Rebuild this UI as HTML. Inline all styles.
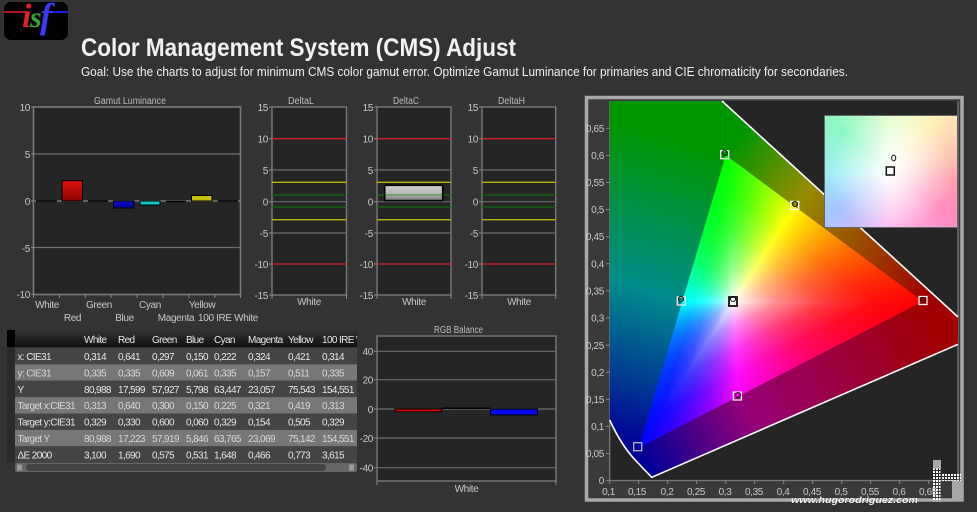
<!DOCTYPE html>
<html><head><meta charset="utf-8"><style>
html,body{margin:0;padding:0;background:#333;width:977px;height:512px;overflow:hidden}
.l{position:absolute;left:0;top:0}
svg text{font-family:"Liberation Sans",sans-serif}
.t{font-size:10px;fill:#c9c9c9;letter-spacing:-.35px}
.tb{font-size:10px;fill:#e8e8e8;letter-spacing:-.62px}
.ti{font-size:10px;fill:#bdbdbd}
</style></head><body>
<svg class="l" width="977" height="512" viewBox="0 0 977 512">
<defs>
<linearGradient id="gL" gradientUnits="userSpaceOnUse" x1="725.7" y1="155" x2="638.7" y2="447.8"><stop offset="0" stop-color="#009600"/><stop offset=".5" stop-color="#008c8c"/><stop offset="1" stop-color="#000096"/></linearGradient>
<linearGradient id="gU" gradientUnits="userSpaceOnUse" x1="725.7" y1="155" x2="922.9" y2="301.4"><stop offset="0" stop-color="#009600"/><stop offset=".35" stop-color="#968c00"/><stop offset="1" stop-color="#a00000"/></linearGradient>
<linearGradient id="gB" gradientUnits="userSpaceOnUse" x1="922.9" y1="301.4" x2="638.7" y2="447.8"><stop offset="0" stop-color="#a00000"/><stop offset=".65" stop-color="#960078"/><stop offset="1" stop-color="#000096"/></linearGradient>
<clipPath id="outer"><path d="M609.7,101 L722,101 L958,317 L958,344.3 L651.7,477.3 L638,463 Q622,447 609.7,420 Z"/></clipPath>
<clipPath id="tc"><rect x="7" y="330" width="350" height="20"/></clipPath>
<linearGradient id="red" x1="0" y1="0" x2="0" y2="1"><stop offset="0" stop-color="#e01212"/><stop offset="1" stop-color="#8a0000"/></linearGradient>
<linearGradient id="blu" x1="0" y1="0" x2="0" y2="1"><stop offset="0" stop-color="#1010c8"/><stop offset="1" stop-color="#000090"/></linearGradient>
<linearGradient id="sil" x1="0" y1="0" x2="0" y2="1"><stop offset="0" stop-color="#d0d0d0"/><stop offset=".6" stop-color="#b4b4b4"/><stop offset="1" stop-color="#777"/></linearGradient>
<linearGradient id="hd" x1="0" y1="0" x2="0" y2="1"><stop offset="0" stop-color="#333"/><stop offset="1" stop-color="#111"/></linearGradient>
</defs>
<rect width="977" height="512" fill="#333"/>

<!-- logo -->
<rect x="4" y="2" width="64" height="38" rx="7" fill="#000"/>
<rect x="3" y="11" width="24" height="2" fill="#b01020"/>
<rect x="52" y="11" width="16" height="2" fill="#1a1ae0"/>
<text x="22" y="27" style="font-family:'Liberation Serif',serif;font-style:italic;font-weight:bold;font-size:34px;fill:#e0202a">i</text>
<text x="30" y="27" style="font-family:'Liberation Serif',serif;font-style:italic;font-weight:bold;font-size:30px;fill:#2ea82e">s</text>
<text x="40" y="28" style="font-family:'Liberation Serif',serif;font-style:italic;font-weight:bold;font-size:36px;fill:#3a3aff">f</text>

<text x="81" y="56" textLength="435" lengthAdjust="spacingAndGlyphs" style="font-size:25px;font-weight:bold;fill:#f2f2f2">Color Management System (CMS) Adjust</text>
<text x="81" y="76" textLength="767" lengthAdjust="spacingAndGlyphs" style="font-size:13px;fill:#f0f0f0">Goal: Use the charts to adjust for minimum CMS color gamut error. Optimize Gamut Luminance for primaries and CIE chromaticity for secondaries.</text>

<!-- Gamut luminance -->
<text class="ti" x="94" y="104" textLength="72" lengthAdjust="spacingAndGlyphs">Gamut Luminance</text>
<rect x="33.5" y="107" width="207" height="187.5" fill="#252525" stroke="#7a7a7a" stroke-width="1.6"/>
<g stroke="#6e6e6e" stroke-width="1.2"><path d="M33.5 154H240.5M33.5 247.5H240.5"/></g>
<path d="M33.5 201H240.5" stroke="#777" stroke-width="1.4"/>
<path d="M36 201H57M88 201H108M166 201.5H186M218 201H238" stroke="#000" stroke-width="1.4"/>
<g stroke="#000" stroke-width="1">
<rect x="62" y="180.7" width="20.5" height="20.3" fill="url(#red)"/>
<rect x="113.5" y="201" width="20.5" height="7" fill="url(#blu)"/>
<rect x="140" y="201" width="20" height="4" fill="#12c8c8"/>
<rect x="191.5" y="195.5" width="20.5" height="5.5" fill="#c8c010"/>
</g>
<g stroke="#888" stroke-width="1"><path d="M31 107h3M31 154h3M31 201h3M31 247.500h3M31 294h3M59.400 294v4M85.300 294v4M111.200 294v4M137.100 294v4M163 294v4M188.900 294v4M214.800 294v4M240.500 294v4M33.500 294v4"/></g>
<g text-anchor="end"><text class="t" x="30" y="111">10</text><text class="t" x="30" y="158">5</text><text class="t" x="30" y="205">0</text><text class="t" x="30" y="252">-5</text><text class="t" x="30" y="298">-10</text></g>
<g text-anchor="middle">
<text class="t" x="47" y="308">White</text><text class="t" x="99" y="308">Green</text><text class="t" x="150" y="308">Cyan</text><text class="t" x="202" y="308">Yellow</text>
<text class="t" x="72.500" y="321">Red</text><text class="t" x="124.500" y="321">Blue</text><text class="t" x="176" y="321">Magenta</text><text class="t" x="228" y="321">100 IRE White</text>
</g>

<!-- Delta charts -->
<g id="dL">
<rect x="272" y="107" width="74.500" height="188" fill="#252525" stroke="#7a7a7a" stroke-width="1.4"/>
<path d="M272 170H346.500M272 201.700H346.500M272 233H346.500" stroke="#6e6e6e" stroke-width="1.2"/>
<path d="M272 138.700H346.500M272 264H346.500" stroke="#d8202a" stroke-width="1.3"/>
<path d="M272 182.300H346.500M272 219.700H346.500" stroke="#b8b800" stroke-width="1.3"/>
<path d="M272 195H346.500M272 207H346.500" stroke="#126012" stroke-width="1.6"/>
<path d="M269 107h3M269 138.700h3M269 170h3M269 201.700h3M269 233h3M269 264h3M269 295h3M272 295v4M346.500 295v4" stroke="#888"/>
<g text-anchor="end"><text class="t" x="268" y="111">15</text><text class="t" x="268" y="142.500">10</text><text class="t" x="268" y="174">5</text><text class="t" x="268" y="205.500">0</text><text class="t" x="268" y="237">-5</text><text class="t" x="268" y="268">-10</text><text class="t" x="268" y="299">-15</text></g>
<text class="ti" x="288" y="104" textLength="26" lengthAdjust="spacingAndGlyphs">DeltaL</text>
<text class="t" x="309" y="305" text-anchor="middle">White</text>
</g>
<g>
<rect x="377" y="107" width="74" height="188" fill="#252525" stroke="#7a7a7a" stroke-width="1.4"/>
<path d="M377 170H451M377 201.700H451M377 233H451" stroke="#6e6e6e" stroke-width="1.2"/>
<path d="M377 138.700H451M377 264H451" stroke="#d8202a" stroke-width="1.3"/>
<rect x="384.700" y="185.300" width="58" height="15.300" fill="url(#sil)" stroke="#000" stroke-width="1.6"/>
<path d="M377 182.300H451M377 219.700H451" stroke="#b8b800" stroke-width="1.3"/>
<path d="M377 195H384M443.500 195H451M377 207H451" stroke="#126012" stroke-width="1.6"/>
<path d="M385.500 195H442" stroke="#5e9e5e" stroke-width="1.6"/>
<path d="M374 107h3M374 138.700h3M374 170h3M374 201.700h3M374 233h3M374 264h3M374 295h3M377 295v4M451 295v4" stroke="#888"/>
<g text-anchor="end"><text class="t" x="373" y="111">15</text><text class="t" x="373" y="142.500">10</text><text class="t" x="373" y="174">5</text><text class="t" x="373" y="205.500">0</text><text class="t" x="373" y="237">-5</text><text class="t" x="373" y="268">-10</text><text class="t" x="373" y="299">-15</text></g>
<text class="ti" x="393" y="104" textLength="26" lengthAdjust="spacingAndGlyphs">DeltaC</text>
<text class="t" x="414" y="305" text-anchor="middle">White</text>
</g>
<g>
<rect x="482" y="107" width="73.700" height="188" fill="#252525" stroke="#7a7a7a" stroke-width="1.4"/>
<path d="M482 170H555.700M482 201.700H555.700M482 233H555.700" stroke="#6e6e6e" stroke-width="1.2"/>
<path d="M482 138.700H555.700M482 264H555.700" stroke="#d8202a" stroke-width="1.3"/>
<path d="M482 182.300H555.700M482 219.700H555.700" stroke="#b8b800" stroke-width="1.3"/>
<path d="M482 195H555.700M482 207H555.700" stroke="#126012" stroke-width="1.6"/>
<path d="M479 107h3M479 138.700h3M479 170h3M479 201.700h3M479 233h3M479 264h3M479 295h3M482 295v4M555.700 295v4" stroke="#888"/>
<g text-anchor="end"><text class="t" x="478" y="111">15</text><text class="t" x="478" y="142.500">10</text><text class="t" x="478" y="174">5</text><text class="t" x="478" y="205.500">0</text><text class="t" x="478" y="237">-5</text><text class="t" x="478" y="268">-10</text><text class="t" x="478" y="299">-15</text></g>
<text class="ti" x="498" y="104" textLength="27" lengthAdjust="spacingAndGlyphs">DeltaH</text>
<text class="t" x="519" y="305" text-anchor="middle">White</text>
</g>

<!-- Table -->
<rect x="7" y="330" width="8" height="133" fill="#2a2a2a"/>
<rect x="7" y="330" width="8" height="17" fill="#000"/>
<rect x="15" y="330" width="342" height="17" fill="url(#hd)"/>
<rect x="15" y="348" width="342" height="16.300" fill="#444"/>
<rect x="15" y="364.300" width="342" height="16.400" fill="#777"/>
<rect x="15" y="380.700" width="342" height="16.400" fill="#444"/>
<rect x="15" y="397.100" width="342" height="16.400" fill="#777"/>
<rect x="15" y="413.500" width="342" height="16.400" fill="#444"/>
<rect x="15" y="429.900" width="342" height="16.400" fill="#777"/>
<rect x="15" y="446.300" width="342" height="16.700" fill="#444"/>
<rect x="15" y="463" width="342" height="9" rx="2" fill="#666"/>
<rect x="26" y="464" width="300" height="7" rx="3" fill="#444"/>
<rect x="17" y="464.500" width="5" height="6" fill="#999"/>
<rect x="349" y="464.500" width="5" height="6" fill="#999"/>
<g clip-path="url(#tc)"><text class="tb" y="343"><tspan x="84">White</tspan><tspan x="118">Red</tspan><tspan x="152">Green</tspan><tspan x="186">Blue</tspan><tspan x="214">Cyan</tspan><tspan x="248">Magenta</tspan><tspan x="288">Yellow</tspan><tspan x="322">100 IRE White</tspan></text></g>
<g>
<text class="tb" y="360"><tspan x="17.500">x: CIE31</tspan><tspan x="84">0,314</tspan><tspan x="118">0,641</tspan><tspan x="152">0,297</tspan><tspan x="186">0,150</tspan><tspan x="214">0,222</tspan><tspan x="248">0,324</tspan><tspan x="288">0,421</tspan><tspan x="322">0,314</tspan></text>
<text class="tb" y="376.400" style="fill:#d8d8d8"><tspan x="17.500">y: CIE31</tspan><tspan x="84">0,335</tspan><tspan x="118">0,335</tspan><tspan x="152">0,609</tspan><tspan x="186">0,061</tspan><tspan x="214">0,335</tspan><tspan x="248">0,157</tspan><tspan x="288">0,511</tspan><tspan x="322">0,335</tspan></text>
<text class="tb" y="392.800"><tspan x="17.500">Y</tspan><tspan x="84">80,988</tspan><tspan x="118">17,599</tspan><tspan x="152">57,927</tspan><tspan x="186">5,798</tspan><tspan x="214">63,447</tspan><tspan x="248">23,057</tspan><tspan x="288">75,543</tspan><tspan x="322">154,551</tspan></text>
<text class="tb" y="409.200" style="fill:#d8d8d8"><tspan x="17.500">Target x:CIE31</tspan><tspan x="84">0,313</tspan><tspan x="118">0,640</tspan><tspan x="152">0,300</tspan><tspan x="186">0,150</tspan><tspan x="214">0,225</tspan><tspan x="248">0,321</tspan><tspan x="288">0,419</tspan><tspan x="322">0,313</tspan></text>
<text class="tb" y="425.600"><tspan x="17.500">Target y:CIE31</tspan><tspan x="84">0,329</tspan><tspan x="118">0,330</tspan><tspan x="152">0,600</tspan><tspan x="186">0,060</tspan><tspan x="214">0,329</tspan><tspan x="248">0,154</tspan><tspan x="288">0,505</tspan><tspan x="322">0,329</tspan></text>
<text class="tb" y="442" style="fill:#d8d8d8"><tspan x="17.500">Target Y</tspan><tspan x="84">80,988</tspan><tspan x="118">17,223</tspan><tspan x="152">57,919</tspan><tspan x="186">5,846</tspan><tspan x="214">63,765</tspan><tspan x="248">23,069</tspan><tspan x="288">75,142</tspan><tspan x="322">154,551</tspan></text>
<text class="tb" y="458.400"><tspan x="17.500">ΔE 2000</tspan><tspan x="84">3,100</tspan><tspan x="118">1,690</tspan><tspan x="152">0,575</tspan><tspan x="186">0,531</tspan><tspan x="214">1,648</tspan><tspan x="248">0,466</tspan><tspan x="288">0,773</tspan><tspan x="322">3,615</tspan></text>
</g>

<!-- RGB Balance -->
<text class="ti" x="434" y="333" textLength="49" lengthAdjust="spacingAndGlyphs">RGB Balance</text>
<rect x="377" y="336" width="179" height="145" fill="#252525" stroke="#7a7a7a" stroke-width="1.4"/>
<path d="M377 351.300H556M377 379.700H556M377 409H556M377 438H556M377 467.700H556" stroke="#6e6e6e" stroke-width="1.2"/>
<rect x="395" y="409" width="46.700" height="2.800" fill="#e00000" stroke="#000" stroke-width="1"/>
<rect x="442" y="407.500" width="48" height="1.500" fill="#000"/>
<rect x="490.500" y="409" width="47" height="6" fill="#0808f0" stroke="#000" stroke-width="1"/>
<path d="M374 351.300h3M374 379.700h3M374 409h3M374 438h3M374 467.700h3M377 481v4M556 481v4" stroke="#888"/>
<g text-anchor="end"><text class="t" x="373" y="355">40</text><text class="t" x="373" y="383.500">20</text><text class="t" x="373" y="413">0</text><text class="t" x="373" y="442">-20</text><text class="t" x="373" y="471.500">-40</text></g>
<text class="t" x="466.500" y="492" text-anchor="middle">White</text>

<!-- CIE frame -->
<rect x="586.500" y="97.500" width="375.500" height="402.500" fill="#3a3a3a" stroke="#a9a9a9" stroke-width="3.500"/>
<rect x="609.700" y="101" width="348.300" height="379.500" fill="#252525"/>
<path d="M609.700 101V480.500H958V101" fill="none" stroke="#777" stroke-width="1.300"/>
<g clip-path="url(#outer)">
<polygon points="725.700,155 725.700,95 600,95 600,490 645,490 638.700,447.800" fill="url(#gL)"/>
<polygon points="725.700,155 725.700,95 977,95 977,270 922.900,301.400" fill="url(#gU)"/>
<polygon points="922.900,301.400 977,270 977,490 645,490 638.700,447.800" fill="url(#gB)"/>
</g>
<g text-anchor="end">
<text class="t" x="604" y="132">0,65</text><text class="t" x="604" y="159">0,6</text><text class="t" x="604" y="186">0,55</text><text class="t" x="604" y="213">0,5</text><text class="t" x="604" y="240">0,45</text><text class="t" x="604" y="267.500">0,4</text><text class="t" x="604" y="294.500">0,35</text><text class="t" x="604" y="321.500">0,3</text><text class="t" x="604" y="349">0,25</text><text class="t" x="604" y="376">0,2</text><text class="t" x="604" y="403">0,15</text><text class="t" x="604" y="430">0,1</text><text class="t" x="604" y="457">0,05</text><text class="t" x="604" y="484">0</text>
</g>
<g text-anchor="middle">
<text class="t" x="608.500" y="495">0,1</text><text class="t" x="637" y="495">0,15</text><text class="t" x="667" y="495">0,2</text><text class="t" x="696" y="495">0,25</text><text class="t" x="725" y="495">0,3</text><text class="t" x="754" y="495">0,35</text><text class="t" x="783" y="495">0,4</text><text class="t" x="812" y="495">0,45</text><text class="t" x="841" y="495">0,5</text><text class="t" x="870" y="495">0,55</text><text class="t" x="899" y="495">0,6</text><text class="t" x="928" y="495">0,65</text>
</g>
<path d="M606 128.300h4M606 155.400h4M606 182.500h4M606 209.600h4M606 236.700h4M606 263.800h4M606 290.900h4M606 318h4M606 345.100h4M606 372.200h4M606 399.300h4M606 426.400h4M606 453.500h4M606 480.600h4M609.700 480v4M638.700 480v4M667.700 480v4M696.700 480v4M725.700 480v4M754.700 480v4M783.700 480v4M812.700 480v4M841.700 480v4M870.700 480v4M899.700 480v4M928.700 480v4" stroke="#888"/>
</svg>

<div class="l" style="width:977px;height:512px;background:conic-gradient(from -2.9deg at 733.2px 302px,#0f0 0deg,#ff0 35.7deg,#f00 92.7deg,#f0f 180.1deg,#00f 215.85deg,#0ff 272.9deg,#0f0 360deg);clip-path:polygon(725.7px 155px,922.9px 301.4px,638.7px 447.8px)"></div>

<svg class="l" width="977" height="512" viewBox="0 0 977 512">
<defs>
<linearGradient id="w1" gradientUnits="userSpaceOnUse" x1="800.9" y1="210.8" x2="733.2" y2="302"><stop offset="0" stop-color="#fff" stop-opacity="0"/><stop offset=".25" stop-color="#fff" stop-opacity=".05"/><stop offset=".5" stop-color="#fff" stop-opacity=".22"/><stop offset=".75" stop-color="#fff" stop-opacity=".53"/><stop offset="1" stop-color="#fff"/></linearGradient>
<linearGradient id="w2" gradientUnits="userSpaceOnUse" x1="686.2" y1="288" x2="733.2" y2="302"><stop offset="0" stop-color="#fff" stop-opacity="0"/><stop offset=".25" stop-color="#fff" stop-opacity=".05"/><stop offset=".5" stop-color="#fff" stop-opacity=".22"/><stop offset=".75" stop-color="#fff" stop-opacity=".53"/><stop offset="1" stop-color="#fff"/></linearGradient>
<linearGradient id="w3" gradientUnits="userSpaceOnUse" x1="772.7" y1="378.8" x2="733.2" y2="302"><stop offset="0" stop-color="#fff" stop-opacity="0"/><stop offset=".25" stop-color="#fff" stop-opacity=".05"/><stop offset=".5" stop-color="#fff" stop-opacity=".22"/><stop offset=".75" stop-color="#fff" stop-opacity=".53"/><stop offset="1" stop-color="#fff"/></linearGradient>
</defs>
<g shape-rendering="crispEdges">
<polygon points="733.2,302 725.7,155 922.9,301.4" fill="url(#w1)"/>
<polygon points="733.2,302 725.7,155 638.7,447.8" fill="url(#w2)"/>
<polygon points="733.2,302 922.9,301.4 638.7,447.800" fill="url(#w3)"/>
</g>
<path d="M722,101 L958,317 M958,344.300 L651.700,477.300 L638,463 Q622,447 609.700,420" fill="none" stroke="#fff" stroke-width="1.600"/>
<g fill="none" stroke-width="1.300">
<rect x="720.700" y="150.700" width="8" height="8" stroke="#eee"/>
<rect x="790.700" y="201.500" width="8" height="8" stroke="#fff"/>
<rect x="919" y="296.500" width="8" height="8" stroke="#eee"/>
<rect x="677.300" y="297" width="8" height="8" stroke="#eee"/>
<rect x="633.700" y="442.700" width="8" height="8" stroke="#bbb"/>
<rect x="733.300" y="392" width="8" height="8" stroke="#eee"/>
<rect x="729" y="297" width="8" height="9" stroke="#111" fill="#fff" stroke-width="1.800"/>
</g>
<g fill="none" stroke="#111" stroke-width="1.100">
<circle cx="724.700" cy="153" r="2.500"/><circle cx="795" cy="204" r="2.500"/><circle cx="923" cy="300" r="2.500"/><circle cx="681" cy="299" r="2.500"/><circle cx="738" cy="395" r="2.500"/><circle cx="733" cy="299" r="2.500"/>
</g>
</svg>

<div class="l" style="left:824px;top:115px;width:134px;height:113px;box-sizing:border-box;border:1.500px solid #666;background:radial-gradient(circle at 66px 56px,#fff 0,rgba(255,255,255,.85) 14px,rgba(255,255,255,0) 62px),conic-gradient(from 0deg at 66px 56px,#e2ffcc 0deg,#fff0b8 40deg,#ffc4ae 75deg,#ff9fb0 100deg,#ff8cc0 125deg,#ffb4f0 180deg,#a4c4ff 235deg,#9ceef4 270deg,#8cf8c4 310deg,#e2ffcc 360deg)"></div>

<svg class="l" width="977" height="512" viewBox="0 0 977 512">
<defs><pattern id="dots2" width="3" height="3" patternUnits="userSpaceOnUse"><rect width="2" height="2" fill="#fff"/></pattern></defs>
<rect x="886.300" y="167" width="8" height="8" fill="none" stroke="#111" stroke-width="1.500"/>
<ellipse cx="893.700" cy="158" rx="2" ry="2.800" fill="none" stroke="#333" stroke-width="1.200"/>
<rect x="933" y="460" width="8" height="8.500" fill="#a8a8a8"/>
<rect x="952" y="481" width="9" height="20" fill="#a8a8a8"/>
<rect x="932.500" y="468.500" width="8" height="33" fill="url(#dots2)"/>
<rect x="941" y="473" width="20" height="8" fill="url(#dots2)"/>
<text x="791" y="503" textLength="127" lengthAdjust="spacingAndGlyphs" style="font-size:9.500px;font-weight:bold;font-style:italic;fill:#fff;stroke:#000;stroke-width:.3px;paint-order:stroke">www.hugorodriguez.com</text>
</svg>
</body></html>
